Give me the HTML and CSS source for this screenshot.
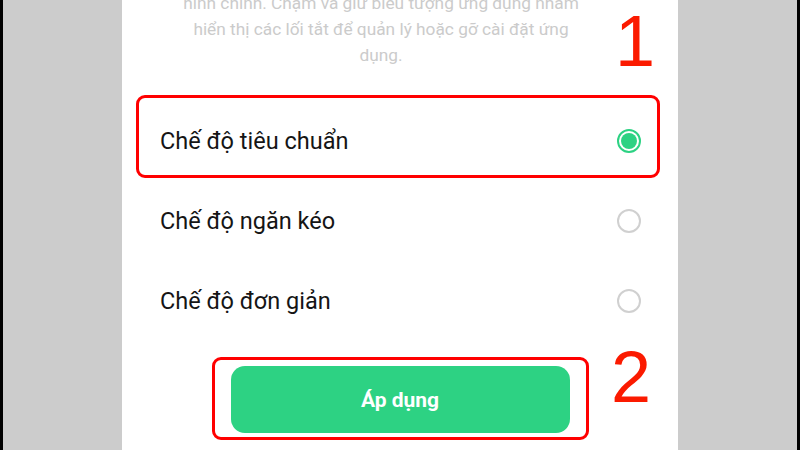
FILE: index.html
```html
<!DOCTYPE html>
<html lang="vi">
<head>
<meta charset="utf-8">
<link rel="stylesheet" href="styles.css">
</head>
<body>
<div class="screen">
  <div class="edge"></div>
  <div class="side"></div>
  <div class="panel">
    <p class="desc">hình chính. Chạm và giữ biểu tượng ứng dụng nhằm<br>hiển thị các lối tắt để quản lý hoặc gỡ cài đặt ứng<br>dụng.</p>
    <div class="options">
      <div class="option">
        <span class="label">Chế độ tiêu chuẩn</span>
        <span class="radio checked"><span class="dot"></span></span>
        <div class="mark mark-1"></div>
      </div>
      <div class="option">
        <span class="label">Chế độ ngăn kéo</span>
        <span class="radio"></span>
      </div>
      <div class="option">
        <span class="label">Chế độ đơn giản</span>
        <span class="radio"></span>
      </div>
    </div>
    <div class="actions">
      <button class="apply">Áp dụng</button>
      <div class="mark mark-2"></div>
    </div>
    <span class="num num-1">1</span>
    <span class="num num-2">2</span>
  </div>
  <div class="side"></div>
  <div class="edge"></div>
</div>
</body>
</html>
```
FILE: styles.css
```css
html, body {
  margin: 0;
  padding: 0;
  background: #cccccc;
}
.screen {
  display: flex;
  width: 800px;
  height: 450px;
  overflow: hidden;
  font-family: Roboto, "Noto Sans", sans-serif;
}
.edge {
  width: 3px;
  background: #000;
  flex: none;
}
.side {
  width: 119px;
  background: #cccccc;
  flex: none;
}
.panel {
  position: relative;
  width: 556px;
  flex: none;
  background: #fff;
  display: flex;
  flex-direction: column;
}
.desc {
  margin: -10px 0 0;
  padding-right: 38px;
  text-align: center;
  font-size: 17.3px;
  line-height: 26px;
  color: #cbcbcb;
}
.options {
  margin-top: 33px;
  display: flex;
  flex-direction: column;
}
.option {
  position: relative;
  height: 80px;
  display: flex;
  align-items: center;
  justify-content: space-between;
  padding: 0 37px 0 38px;
}
.label {
  font-size: 23.5px;
  color: #151515;
}
.radio {
  box-sizing: border-box;
  width: 24px;
  height: 24px;
  border: 2px solid #d0d0d0;
  border-radius: 50%;
  display: flex;
  align-items: center;
  justify-content: center;
}
.radio.checked {
  border-color: #2dd283;
}
.dot {
  width: 16px;
  height: 16px;
  border-radius: 50%;
  background: #2dd283;
}
.actions {
  position: relative;
  margin-top: 25px;
  align-self: center;
}
.apply {
  display: block;
  width: 339px;
  height: 67px;
  border: none;
  border-radius: 14px;
  background: #2dd283;
  color: #fff;
  font-family: Roboto, "Noto Sans", sans-serif;
  font-weight: bold;
  font-size: 21px;
}
.mark {
  position: absolute;
  box-sizing: border-box;
  border: 3px solid #ff0000;
  border-radius: 9px;
}
.mark-1 {
  left: 14px;
  top: -6px;
  width: 524px;
  height: 83px;
}
.mark-2 {
  left: -19px;
  top: -9px;
  width: 377px;
  height: 83px;
}
.num {
  position: absolute;
  font-family: "Liberation Sans", Arial, sans-serif;
  font-size: 72px;
  line-height: 72px;
  color: #fb1a00;
}
.num-1 {
  left: 493px;
  top: 5px;
}
.num-2 {
  left: 489px;
  top: 341px;
}
```
